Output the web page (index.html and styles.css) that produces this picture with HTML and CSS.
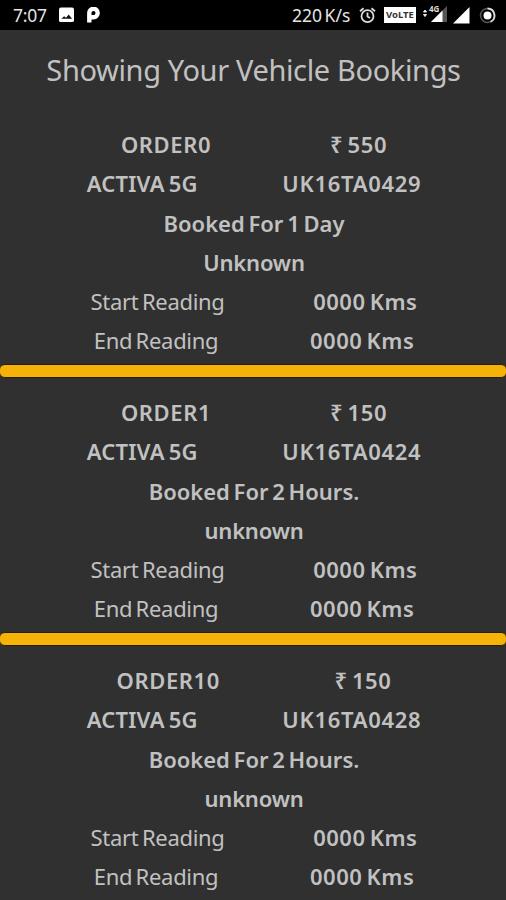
FILE: index.html
```html
<!DOCTYPE html>
<html lang="en">
<head>
<meta charset="utf-8">
<title>Vehicle Bookings</title>
<link rel="stylesheet" href="styles.css">
</head>
<body>
<header class="status">
  <span class="clock">7:07</span>
  <svg class="photo" width="15" height="16" viewBox="0 0 16 16"><rect width="16" height="15.5" rx="2" fill="#fff"/><path d="M2.500 12 5.500 9.200 7.500 11 10.300 7.500 14 12Z" fill="#111"/></svg>
  <svg class="parking" width="13" height="16" viewBox="0 0 13 16"><path d="M2.300 15.500V6.300A4.200 4.200 0 1 1 6.500 10.200H4.500" fill="none" stroke="#fff" stroke-width="4.400"/></svg>
  <span class="speed">220 K/s</span>
  <svg class="alarm" width="17" height="17" viewBox="0 0 17 17" fill="none" stroke="#ddd" stroke-width="1.8"><circle cx="8.500" cy="9.200" r="6"/><path d="M8.500 5.500V9.500L11 11M1 4.200 4.500 1.200M16 4.200 12.500 1.200"/></svg>
  <span class="volte">VoLTE</span>
  <svg class="signal-a" width="26" height="19" viewBox="0 0 26 19"><path d="M9 18 25 2V18Z" fill="#555"/><path d="M9 18 20.500 6.500V18Z" fill="#fff"/><path d="M1.500 8 3 6 4.500 8ZM1.500 10.500H4.500L3 12.500Z" fill="#eee" stroke="#eee"/><text x="7" y="8" class="net">4G</text></svg>
  <svg class="signal-b" width="17" height="17" viewBox="0 0 17 17"><path d="M0 16.500 16.500 0V16.500Z" fill="#fff"/></svg>
  <svg class="ring" width="17" height="17" viewBox="0 0 17 17"><circle cx="8.500" cy="8.500" r="7" fill="none" stroke="#555" stroke-width="1.500"/><path d="M8.500 1.500A7 7 0 0 1 11.500 14.800" fill="none" stroke="#ddd" stroke-width="1.800"/><circle cx="8.500" cy="8.500" r="4" fill="#fff"/></svg>
</header>
<main>
  <h1>Showing Your Vehicle Bookings</h1>
  <section class="booking">
    <div class="row"><b class="order">ORDER0</b><b class="price">₹ 550</b></div>
    <div class="row"><b class="model">ACTIVA 5G</b><b class="plate">UK16TA0429</b></div>
    <div class="row"><b class="term">Booked For 1 Day</b></div>
    <div class="row"><b class="state">Unknown</b></div>
    <div class="row"><span class="label">Start Reading</span><b class="kms">0000 Kms</b></div>
    <div class="row"><span class="label">End Reading</span><b class="kms">0000 Kms</b></div>
  </section>
  <div class="divider"></div>
  <section class="booking">
    <div class="row"><b class="order">ORDER1</b><b class="price">₹ 150</b></div>
    <div class="row"><b class="model">ACTIVA 5G</b><b class="plate">UK16TA0424</b></div>
    <div class="row"><b class="term">Booked For 2 Hours.</b></div>
    <div class="row"><b class="state">unknown</b></div>
    <div class="row"><span class="label">Start Reading</span><b class="kms">0000 Kms</b></div>
    <div class="row"><span class="label">End Reading</span><b class="kms">0000 Kms</b></div>
  </section>
  <div class="divider"></div>
  <section class="booking">
    <div class="row"><b class="order">ORDER10</b><b class="price">₹ 150</b></div>
    <div class="row"><b class="model">ACTIVA 5G</b><b class="plate">UK16TA0428</b></div>
    <div class="row"><b class="term">Booked For 2 Hours.</b></div>
    <div class="row"><b class="state">unknown</b></div>
    <div class="row"><span class="label">Start Reading</span><b class="kms">0000 Kms</b></div>
    <div class="row"><span class="label">End Reading</span><b class="kms">0000 Kms</b></div>
  </section>
</main>
</body>
</html>
```
FILE: styles.css
```css
* { box-sizing: border-box; }
html { background: #303030; }
body {
  margin: 0;
  height: 900px;
  overflow: hidden;
  background: #303030;
  color: #c1c1c1;
  font: 22px "Noto Sans", sans-serif;
}
.status {
  display: flex;
  align-items: center;
  height: 30px;
  padding: 0 10px 0 13px;
  background: #000;
  color: #e4e4e4;
  font-size: 17.5px;
  line-height: 30px;
}
.status svg { flex: none; }
.clock { width: 46px; letter-spacing: -0.2px; }
.parking { margin-left: 13px; }
.speed { width: 67px; margin-left: auto; letter-spacing: 0; word-spacing: -2px; white-space: nowrap; }
.volte {
  width: 32px;
  height: 16px;
  margin-left: 8px;
  background: #fff;
  color: #333;
  font-size: 9.5px;
  font-weight: 700;
  line-height: 16px;
  text-align: center;
}
.signal-a { margin: -4px 0 0 6px; }
.signal-b { margin-left: 5px; }
.ring { margin-left: 9px; }
.net { font-size: 8px; font-weight: 700; fill: #ddd; }
h1 {
  height: 95px;
  margin: 0;
  padding: 20px 0 0 1px;
  font-size: 29px;
  font-weight: 400;
  line-height: 40px;
  letter-spacing: -0.36px;
  text-align: center;
  white-space: nowrap;
}
.booking { height: 239px; padding-left: 2px; }
.row {
  display: flex;
  justify-content: space-evenly;
  height: 39.3px;
  line-height: 39.3px;
  white-space: nowrap;
}
.row b { font-weight: 600; word-spacing: -2px; }
.order { letter-spacing: 0.6px; }
.price { letter-spacing: 0.6px; }
.model { letter-spacing: 0.2px; }
.plate { letter-spacing: 0.7px; }
.row .term { letter-spacing: 0; }
.state { letter-spacing: -0.2px; }
.kms { letter-spacing: 0.5px; }
.label { letter-spacing: -0.3px; word-spacing: -2px; }
.divider {
  height: 14px;
  margin-bottom: 15px;
  border: solid #2a1d08;
  border-width: 1px 0;
  border-radius: 5px;
  background: #f6b209;
}
```
